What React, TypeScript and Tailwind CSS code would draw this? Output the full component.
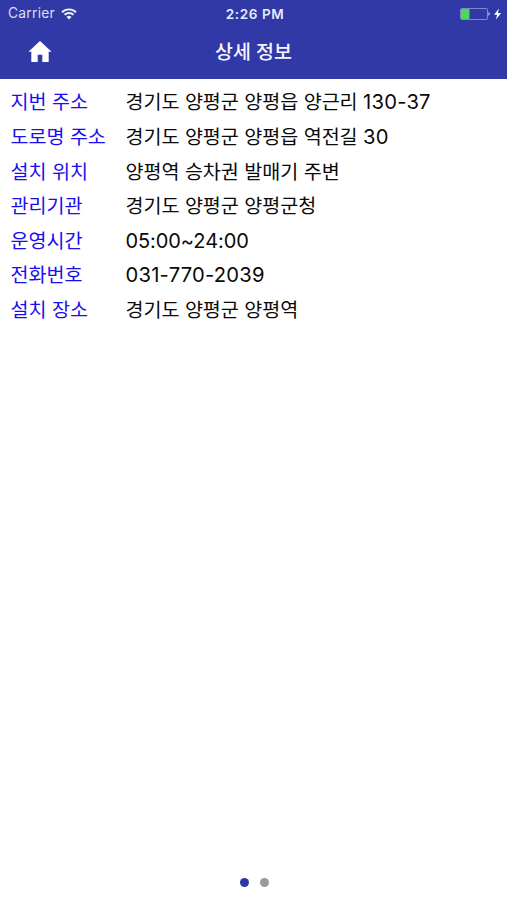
const rows = [
  { label: '지번 주소', value: '경기도 양평군 양평읍 양근리 ', number: '130-37' },
  { label: '도로명 주소', value: '경기도 양평군 양평읍 역전길 ', number: '30' },
  { label: '설치 위치', value: '양평역 승차권 발매기 주변' },
  { label: '관리기관', value: '경기도 양평군 양평군청' },
  { label: '운영시간', number: '05:00~24:00' },
  { label: '전화번호', number: '031-770-2039' },
  { label: '설치 장소', value: '경기도 양평군 양평역' },
];

function StatusBar() {
  return (
    <div className="grid h-[27px] grid-cols-3 items-center pl-[8px] pr-[5px] text-[#dcdff5]">
      <div className="flex items-center gap-[6px]">
        <span className="text-[13.8px] tracking-[0.25px]">Carrier</span>
        <svg width="16" height="12" viewBox="0 0 16 12" fill="none" stroke="#eef0ff" strokeWidth="1.9">
          <path d="M1 4.2a10 10 0 0 1 14 0" />
          <path d="M3.5 6.8a6.4 6.4 0 0 1 9 0" />
          <path d="M8 11.5 5.5 8.9a3.6 3.6 0 0 1 5 0Z" fill="#eef0ff" stroke="none" />
        </svg>
      </div>
      <span className="whitespace-nowrap pt-px text-center text-[13.5px] font-semibold tracking-[0.6px] text-[#e8eafc]">2:26 PM</span>
      <div className="flex items-center justify-end">
        <svg width="42" height="14" viewBox="0 0 42 14">
          <rect x="0.5" y="1.5" width="27" height="11" rx="1.5" fill="none" stroke="#8288d0" />
          <rect x="1" y="2" width="8.5" height="10" rx="1" fill="#4cd95b" />
          <path d="M28.5 5.3c1.6.3 1.6 3.1 0 3.4Z" fill="#e6e8fb" />
          <path d="M39 1.5 34 7.7h3L36 12.5l5.2-6.6h-3.3Z" fill="#ffffff" />
        </svg>
      </div>
    </div>
  );
}

export default function App() {
  return (
    <div className="flex h-[900px] w-[507px] flex-col overflow-hidden bg-white font-['Inter','Noto_Sans_CJK_KR',sans-serif]">
      <header className="h-[79px] bg-[#3039a5]">
        <StatusBar />
        <div className="grid h-[52px] grid-cols-[80px_1fr_80px] items-center">
          <svg className="mb-[3px] ml-[28px]" width="24" height="22" viewBox="0 0 24 22" fill="#ffffff">
            <path d="M12 0 23.6 10.8H20.7V21H14.3V13.8H9.7V21H3.3V10.8H0.4Z" />
          </svg>
          <h1 className="text-center text-[19.5px] font-medium text-[#f4f5ff]">상세 정보</h1>
        </div>
      </header>

      {/* Detail rows */}
      <dl className="mt-[6.4px] flex-1 text-[19.6px] tracking-[-0.05px]">
        {rows.map((row) => (
          <div key={row.label} className="flex h-[34.6px] items-baseline pl-[10.5px] leading-[34px]">
            <dt className="w-[115px] whitespace-nowrap text-[#1a0ef0]">{row.label}</dt>
            <dd className="whitespace-pre text-[#0a0a0a]">
              {row.value}
              {row.number && (
                <span className={row.number.includes(':') ? 'text-[20px] tracking-[-0.08px]' : 'text-[20.2px] tracking-[0.22px]'}>
                  {row.number}
                </span>
              )}
            </dd>
          </div>
        ))}
      </dl>

      {/* Page indicator */}
      <div className="flex h-[36px] items-center justify-center gap-[11px] pl-px">
        <span className="h-[9px] w-[9px] rounded-full bg-[#2d37a8]" />
        <span className="h-[9px] w-[9px] rounded-full bg-[#999999]" />
      </div>
    </div>
  );
}
